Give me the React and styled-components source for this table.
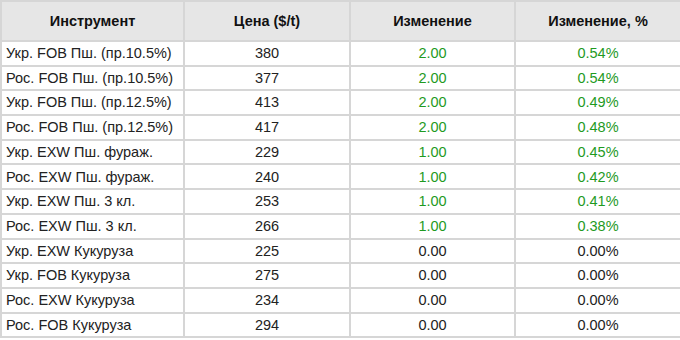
import React from "react";
import styled, { createGlobalStyle } from "styled-components";

const Global = createGlobalStyle`
  html, body { margin: 0; padding: 0; background: #fff; }
  body { font-family: "Liberation Sans", Arial, sans-serif; }
`;

const Table = styled.table`
  width: 680px;
  table-layout: fixed;
  border-collapse: collapse;
  font-family: "Liberation Sans", Arial, sans-serif;
  font-size: 14.5px;
  color: #222;
`;

const HeadCell = styled.th`
  height: 38px;
  padding: 0;
  background: #e6e6e6;
  border: 2px solid #d6d6d6;
  font-weight: bold;
  color: #111;
  text-align: center;
`;

const Cell = styled.td`
  height: 22.7px;
  padding: 0 ${(p) => (p.$left ? "4px" : "0")};
  border: 2px solid #d6d6d6;
  text-align: ${(p) => (p.$left ? "left" : "center")};
  color: ${(p) => (p.$up ? "#1f9a1f" : "#222")};
  white-space: nowrap;
  line-height: 1;
`;

const rows = [
  ["Укр. FOB Пш. (пр.10.5%)", "380", "2.00", "0.54%"],
  ["Рос. FOB Пш. (пр.10.5%)", "377", "2.00", "0.54%"],
  ["Укр. FOB Пш. (пр.12.5%)", "413", "2.00", "0.49%"],
  ["Рос. FOB Пш. (пр.12.5%)", "417", "2.00", "0.48%"],
  ["Укр. EXW Пш. фураж.", "229", "1.00", "0.45%"],
  ["Рос. EXW Пш. фураж.", "240", "1.00", "0.42%"],
  ["Укр. EXW Пш. 3 кл.", "253", "1.00", "0.41%"],
  ["Рос. EXW Пш. 3 кл.", "266", "1.00", "0.38%"],
  ["Укр. EXW Кукуруза", "225", "0.00", "0.00%"],
  ["Укр. FOB Кукуруза", "275", "0.00", "0.00%"],
  ["Рос. EXW Кукуруза", "234", "0.00", "0.00%"],
  ["Рос. FOB Кукуруза", "294", "0.00", "0.00%"],
];

export default function App() {
  return (
    <>
      <Global />
      <Table>
        <colgroup>
          <col style={{ width: 183 }} />
          <col style={{ width: 166 }} />
          <col style={{ width: 165 }} />
          <col style={{ width: 166 }} />
        </colgroup>
        <thead>
          <tr>
            <HeadCell>Инструмент</HeadCell>
            <HeadCell>Цена ($/t)</HeadCell>
            <HeadCell>Изменение</HeadCell>
            <HeadCell>Изменение, %</HeadCell>
          </tr>
        </thead>
        <tbody>
          {rows.map((r) => {
            const up = parseFloat(r[2]) > 0;
            return (
              <tr key={r[0]}>
                <Cell $left>{r[0]}</Cell>
                <Cell>{r[1]}</Cell>
                <Cell $up={up}>{r[2]}</Cell>
                <Cell $up={up}>{r[3]}</Cell>
              </tr>
            );
          })}
        </tbody>
      </Table>
    </>
  );
}
